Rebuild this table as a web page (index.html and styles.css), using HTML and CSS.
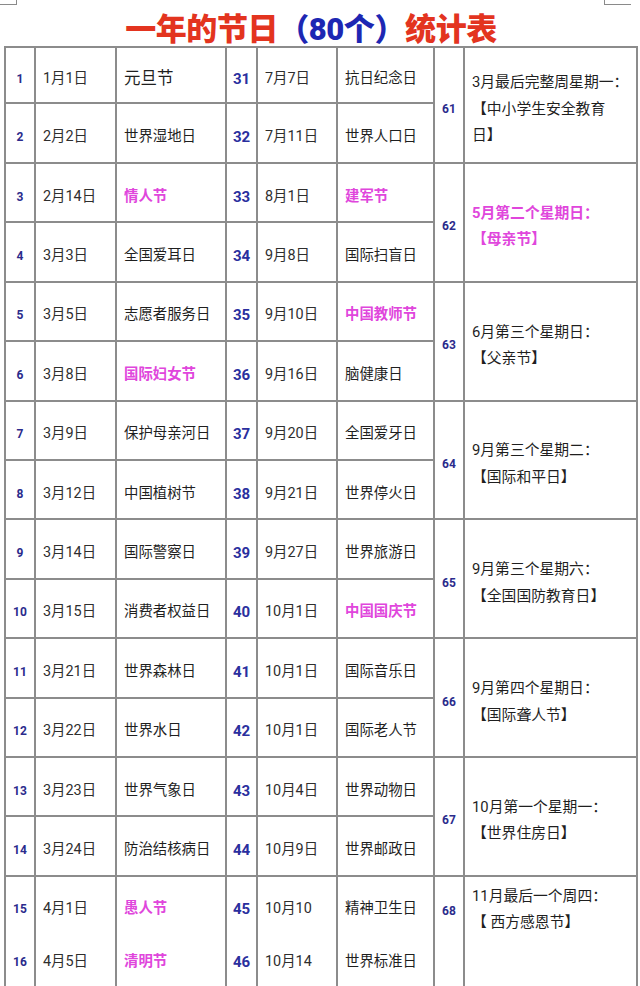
FILE: index.html
```html
<!DOCTYPE html>
<html lang="zh-CN">
<head>
<meta charset="utf-8">
<title>一年的节日（80个）统计表</title>
<link rel="stylesheet" href="styles.css">
</head>
<body>
<div class="marks"><span class="mark-l"></span><span class="mark-r"></span></div>
<h1 class="title"><span class="red">一年的节日</span><span class="blue">（80个）</span><span class="red">统计表</span></h1>
<table class="tbl">
<colgroup>
<col class="c1"><col class="c2"><col class="c3"><col class="c4"><col class="c5"><col class="c6"><col class="c7"><col class="c8">
</colgroup>
<tbody>
<tr class="r1"><td class="n">1</td><td class="d">1月1日</td><td class="t big">元旦节</td><td class="n2">31</td><td class="d">7月7日</td><td class="t">抗日纪念日</td><td class="n3" rowspan="2">61</td><td class="x" rowspan="2">3月最后完整周星期一：<br>【中小学生安全教育<br>日】</td></tr>
<tr class="r2"><td class="n">2</td><td class="d">2月2日</td><td class="t">世界湿地日</td><td class="n2">32</td><td class="d">7月11日</td><td class="t">世界人口日</td></tr>
<tr class="r"><td class="n">3</td><td class="d">2月14日</td><td class="t pk">情人节</td><td class="n2">33</td><td class="d">8月1日</td><td class="t pk">建军节</td><td class="n3" rowspan="2">62</td><td class="x pk" rowspan="2">5月第二个星期日：<br>【母亲节】</td></tr>
<tr class="r"><td class="n">4</td><td class="d">3月3日</td><td class="t">全国爱耳日</td><td class="n2">34</td><td class="d">9月8日</td><td class="t">国际扫盲日</td></tr>
<tr class="r"><td class="n">5</td><td class="d">3月5日</td><td class="t">志愿者服务日</td><td class="n2">35</td><td class="d">9月10日</td><td class="t pk">中国教师节</td><td class="n3" rowspan="2">63</td><td class="x" rowspan="2">6月第三个星期日：<br>【父亲节】</td></tr>
<tr class="r"><td class="n">6</td><td class="d">3月8日</td><td class="t pk">国际妇女节</td><td class="n2">36</td><td class="d">9月16日</td><td class="t">脑健康日</td></tr>
<tr class="r"><td class="n">7</td><td class="d">3月9日</td><td class="t">保护母亲河日</td><td class="n2">37</td><td class="d">9月20日</td><td class="t">全国爱牙日</td><td class="n3" rowspan="2">64</td><td class="x" rowspan="2">9月第三个星期二：<br>【国际和平日】</td></tr>
<tr class="r"><td class="n">8</td><td class="d">3月12日</td><td class="t">中国植树节</td><td class="n2">38</td><td class="d">9月21日</td><td class="t">世界停火日</td></tr>
<tr class="r"><td class="n">9</td><td class="d">3月14日</td><td class="t">国际警察日</td><td class="n2">39</td><td class="d">9月27日</td><td class="t">世界旅游日</td><td class="n3" rowspan="2">65</td><td class="x" rowspan="2">9月第三个星期六：<br>【全国国防教育日】</td></tr>
<tr class="r"><td class="n">10</td><td class="d">3月15日</td><td class="t">消费者权益日</td><td class="n2">40</td><td class="d">10月1日</td><td class="t pk">中国国庆节</td></tr>
<tr class="r"><td class="n">11</td><td class="d">3月21日</td><td class="t">世界森林日</td><td class="n2">41</td><td class="d">10月1日</td><td class="t">国际音乐日</td><td class="n3" rowspan="2">66</td><td class="x" rowspan="2">9月第四个星期日：<br>【国际聋人节】</td></tr>
<tr class="r"><td class="n">12</td><td class="d">3月22日</td><td class="t">世界水日</td><td class="n2">42</td><td class="d">10月1日</td><td class="t">国际老人节</td></tr>
<tr class="r"><td class="n">13</td><td class="d">3月23日</td><td class="t">世界气象日</td><td class="n2">43</td><td class="d">10月4日</td><td class="t">世界动物日</td><td class="n3" rowspan="2">67</td><td class="x" rowspan="2">10月第一个星期一：<br>【世界住房日】</td></tr>
<tr class="r"><td class="n">14</td><td class="d">3月24日</td><td class="t">防治结核病日</td><td class="n2">44</td><td class="d">10月9日</td><td class="t">世界邮政日</td></tr>
<tr class="r15"><td class="n">15</td><td class="d">4月1日</td><td class="t pk">愚人节</td><td class="n2">45</td><td class="d">10月10</td><td class="t">精神卫生日</td><td class="n3 top68" rowspan="2">68</td><td class="x top68x" rowspan="2">11月最后一个周四：<br>【 西方感恩节】</td></tr>
<tr class="r16"><td class="n">16</td><td class="d">4月5日</td><td class="t pk">清明节</td><td class="n2">46</td><td class="d">10月14</td><td class="t">世界标准日</td></tr>
</tbody>
</table>
</body>
</html>
```

FILE: styles.css
```css
html, body {
  margin: 0;
  padding: 0;
  background: #ffffff;
}
body {
  font-family: Roboto, "Noto Sans CJK SC", sans-serif;
  color: #222222;
  overflow: hidden;
}
.marks {
  display: flex;
  justify-content: space-between;
  height: 6px;
  padding-right: 9px;
}
.mark-l {
  width: 16px;
  height: 4px;
  border-right: 1.5px solid #8a8a8a;
  border-bottom: 1.5px solid #8a8a8a;
}
.mark-r {
  width: 26px;
  height: 4px;
  border-left: 1.5px solid #8a8a8a;
  border-bottom: 1.5px solid #8a8a8a;
}
.title {
  margin: 2px 0 0 0;
  padding-right: 18px;
  height: 38px;
  line-height: 38px;
  font-size: 31px;
  font-weight: 900;
  text-align: center;
  font-family: "Noto Sans CJK SC", sans-serif;
  letter-spacing: -0.4px;
}
.red { color: #e3341f; }
.blue { color: #1d27b3; font-family: Roboto, "Noto Sans CJK SC", sans-serif; }

.tbl {
  margin-left: 4px;
  width: 632px;
  table-layout: fixed;
  border-collapse: collapse;
}
.c1 { width: 30px; }
.c2 { width: 81px; }
.c3 { width: 110px; }
.c4 { width: 31px; }
.c5 { width: 80px; }
.c6 { width: 97px; }
.c7 { width: 30px; }
.c8 { width: 173px; }

.tbl td {
  border: 2px solid #8c8c8c;
  padding: 8px 0 0 0;
  vertical-align: middle;
  font-size: 14.4px;
  line-height: 20px;
  white-space: nowrap;
  overflow: hidden;
}
.r1 { height: 56px; }
.r2 { height: 60px; }
.r { height: 59.4px; }
.r15 { height: 58px; }
.r16 { height: 70px; }
.r15 td { border-bottom-style: hidden; }
.r16 td { vertical-align: top; padding-top: 18px; }

.tbl td.n {
  text-align: center;
  font-size: 12px;
  font-weight: 700;
  color: #2b2b8c;
}
.tbl td.n2 {
  text-align: center;
  font-size: 15px;
  font-weight: 700;
  color: #2a2f9e;
}
.tbl td.n3 {
  text-align: center;
  font-size: 12px;
  font-weight: 700;
  color: #2b2b8c;
}
.tbl td.d {
  padding-left: 7px;
  color: #2e2e2e;
}
.tbl td.t {
  padding-left: 7px;
  color: #1f1f1f;
}
.tbl td.big {
  font-size: 16.5px;
}
.tbl td.x {
  padding-left: 7px;
  padding-right: 2px;
  font-size: 14.8px;
  line-height: 26.5px;
  color: #1f1f1f;
}
.tbl td.pk {
  color: #e046dc;
  font-weight: 700;
}
.tbl td.top68 {
  vertical-align: top;
  padding-top: 24px;
}
.tbl td.top68x {
  vertical-align: top;
  padding-top: 6px;
}
```
